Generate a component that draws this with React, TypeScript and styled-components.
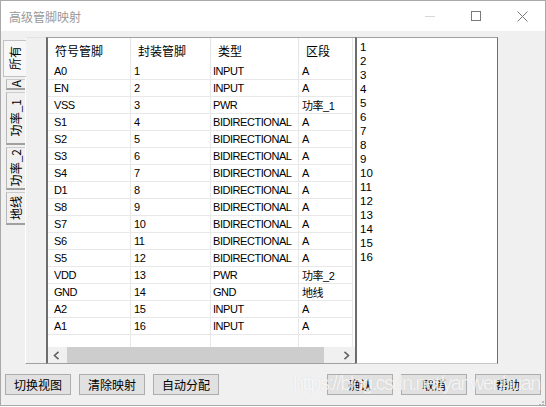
import React from "react";
import styled, { createGlobalStyle } from "styled-components";

const GlobalStyle = createGlobalStyle`
  html, body {
    margin: 0;
    padding: 0;
    background: #ffffff;
  }
  body {
    font-family: "Liberation Sans", "Noto Sans CJK SC", sans-serif;
  }
`;

type Pin = [string, string, string, string];

const pins: Pin[] = [
  ["A0", "1", "INPUT", "A"],
  ["EN", "2", "INPUT", "A"],
  ["VSS", "3", "PWR", "功率_1"],
  ["S1", "4", "BIDIRECTIONAL", "A"],
  ["S2", "5", "BIDIRECTIONAL", "A"],
  ["S3", "6", "BIDIRECTIONAL", "A"],
  ["S4", "7", "BIDIRECTIONAL", "A"],
  ["D1", "8", "BIDIRECTIONAL", "A"],
  ["S8", "9", "BIDIRECTIONAL", "A"],
  ["S7", "10", "BIDIRECTIONAL", "A"],
  ["S6", "11", "BIDIRECTIONAL", "A"],
  ["S5", "12", "BIDIRECTIONAL", "A"],
  ["VDD", "13", "PWR", "功率_2"],
  ["GND", "14", "GND", "地线"],
  ["A2", "15", "INPUT", "A"],
  ["A1", "16", "INPUT", "A"],
];

const headers = ["符号管脚", "封装管脚", "类型", "区段"];
const colWidths = [83, 80, 88, 54];
const cellPad = [6, 3, 2, 3];

const tabs = [
  { label: "所有", h: 37, active: true },
  { label: "A", h: 11, active: false },
  { label: "功率_1", h: 53, active: false },
  { label: "功率_2", h: 43, active: false },
  { label: "地线", h: 33, active: false },
];

export default function App() {
  return (
    <>
      <GlobalStyle />
      <Window>
        <TitleBar>
          <Title>高级管脚映射</Title>
          <CtrlButton>
            <svg width="10" height="10" viewBox="0 0 10 10">
              <line x1="0" y1="5.5" x2="10" y2="5.5" stroke="#d6d6d6" strokeWidth="1" />
            </svg>
          </CtrlButton>
          <CtrlButton>
            <svg width="10" height="10" viewBox="0 0 10 10">
              <rect x="0.5" y="0.5" width="9" height="9" fill="none" stroke="#7a7a7a" strokeWidth="1" />
            </svg>
          </CtrlButton>
          <CtrlButton>
            <svg width="11" height="11" viewBox="0 0 11 11">
              <path d="M0.5 0.5 L10.5 10.5 M10.5 0.5 L0.5 10.5" stroke="#7a7a7a" strokeWidth="1" />
            </svg>
          </CtrlButton>
        </TitleBar>

        <Body>
          <MainRow>
            <TabStrip>
              {tabs.map((t) => (
                <Tab key={t.label} $active={t.active} $h={t.h}>
                  <TabLabel>{t.label}</TabLabel>
                </Tab>
              ))}
            </TabStrip>
            <TabPanel />

            <Grid>
              <Viewport>
                <Row $header>
                  {headers.map((h, i) => (
                    <HeadCell key={h} $w={colWidths[i]}>
                      {h}
                    </HeadCell>
                  ))}
                </Row>
                {pins.map((p) => (
                  <Row key={p[0]}>
                    {p.map((v, i) => (
                      <Cell key={i} $w={colWidths[i]} $pad={cellPad[i]}>
                        {v}
                      </Cell>
                    ))}
                  </Row>
                ))}
                <Row>
                  {colWidths.map((w, i) => (
                    <Cell key={i} $w={w} $pad={cellPad[i]} />
                  ))}
                </Row>
              </Viewport>
              <HScroll>
                <ArrowBtn>
                  <svg width="7" height="9" viewBox="0 0 7 9">
                    <polyline points="5.5,0.8 1.5,4.5 5.5,8.2" fill="none" stroke="#606060" strokeWidth="1.6" />
                  </svg>
                </ArrowBtn>
                <Track>
                  <Thumb />
                </Track>
                <ArrowBtn>
                  <svg width="7" height="9" viewBox="0 0 7 9">
                    <polyline points="1.5,0.8 5.5,4.5 1.5,8.2" fill="none" stroke="#606060" strokeWidth="1.6" />
                  </svg>
                </ArrowBtn>
              </HScroll>
            </Grid>

            <ListBox>
              {pins.map((p) => (
                <ListItem key={p[1]}>{p[1]}</ListItem>
              ))}
            </ListBox>
          </MainRow>

          <ButtonRow>
            <Button>切换视图</Button>
            <Button>清除映射</Button>
            <Button>自动分配</Button>
            <Spacer />
            <Button>确认</Button>
            <Button>取消</Button>
            <Button>帮助</Button>
          </ButtonRow>
        </Body>

        <Watermark>https://blog.csdn.net/yanwenhuan</Watermark>
        <Grip>
          <svg width="9" height="9" viewBox="0 0 9 9">
            <rect x="7" y="1" width="2" height="2" fill="#b8b8b8" />
            <rect x="4" y="4" width="2" height="2" fill="#b8b8b8" />
            <rect x="7" y="4" width="2" height="2" fill="#b8b8b8" />
            <rect x="1" y="7" width="2" height="2" fill="#b8b8b8" />
            <rect x="4" y="7" width="2" height="2" fill="#b8b8b8" />
            <rect x="7" y="7" width="2" height="2" fill="#b8b8b8" />
          </svg>
        </Grip>
      </Window>
    </>
  );
}

///////// Styled Components /////////
const Window = styled.div`
  position: relative;
  width: 546px;
  height: 406px;
  box-sizing: border-box;
  border: 1px solid #a9a9a9;
  background: #f0f0f0;
  display: flex;
  flex-direction: column;
  overflow: hidden;
`;

const TitleBar = styled.div`
  height: 30px;
  background: #ffffff;
  display: flex;
  align-items: center;
  flex-shrink: 0;
`;

const Title = styled.div`
  flex: 1;
  padding-left: 8px;
  font-family: "Noto Sans CJK SC", sans-serif;
  font-size: 12px;
  color: #999999;
`;

const CtrlButton = styled.div`
  width: 46px;
  height: 30px;
  display: flex;
  align-items: center;
  justify-content: center;
`;

const Body = styled.div`
  flex: 1;
  padding: 6px 4px 0 3px;
  display: flex;
  flex-direction: column;
`;

const MainRow = styled.div`
  display: flex;
  height: 327px;
`;

const TabStrip = styled.div`
  width: 22px;
  padding-top: 3px;
  display: flex;
  flex-direction: column;
  align-items: flex-end;
  gap: 2px;
  position: relative;
  z-index: 1;
  margin-right: -1px;
`;

const Tab = styled.div<{ $active: boolean; $h: number }>`
  box-sizing: border-box;
  width: ${(p) => (p.$active ? "23px" : "19px")};
  height: ${(p) => p.$h}px;
  background: ${(p) => (p.$active ? "#f7f7f7" : "#f0f0f0")};
  border-left: 1px solid ${(p) => (p.$active ? "#c2c2c2" : "#b8b8b8")};
  border-top: 1px solid ${(p) => (p.$active ? "#c2c2c2" : "#cccccc")};
  border-bottom: ${(p) => (p.$active ? "1px solid #c2c2c2" : "2px solid #a0a0a0")};
  display: flex;
  align-items: center;
  justify-content: center;
  overflow: hidden;
  margin-right: ${(p) => (p.$active ? "0" : "1px")};
`;

const TabLabel = styled.span`
  writing-mode: vertical-rl;
  text-orientation: sideways;
  transform: rotate(180deg);
  font-family: "Noto Sans CJK SC", sans-serif;
  font-size: 12px;
  line-height: 14px;
  color: #000000;
  white-space: nowrap;
`;

const TabPanel = styled.div`
  box-sizing: border-box;
  width: 21px;
  background: #f0f0f0;
  border-left: 1px solid #ffffff;
  border-top: 1px solid #e3e3e3;
  border-bottom: 1px solid #a0a0a0;
`;

const Grid = styled.div`
  box-sizing: border-box;
  width: 309px;
  display: flex;
  flex-direction: column;
  background: #ffffff;
  border-top: 1px solid #a0a0a0;
  border-left: 2px solid #6d6d6d;
  border-bottom: 1px solid #a0a0a0;
`;

const Viewport = styled.div`
  flex: 1;
  overflow: hidden;
`;

const Row = styled.div<{ $header?: boolean }>`
  display: flex;
  height: ${(p) => (p.$header ? "25px" : "17px")};
`;

const HeadCell = styled.div<{ $w: number }>`
  box-sizing: border-box;
  width: ${(p) => p.$w}px;
  padding-left: 7px;
  display: flex;
  align-items: center;
  border-right: 1px solid #e5e5e5;
  font-family: "Noto Sans CJK SC", sans-serif;
  font-size: 12px;
  color: #000000;
`;

const Cell = styled.div<{ $w: number; $pad: number }>`
  box-sizing: border-box;
  width: ${(p) => p.$w}px;
  padding-left: ${(p) => p.$pad}px;
  display: flex;
  align-items: center;
  border-right: 1px solid #e8e8e8;
  border-bottom: 1px solid #e8e8e8;
  font-size: 11px;
  letter-spacing: -0.45px;
  color: #000000;
  white-space: nowrap;
  overflow: hidden;
`;

const HScroll = styled.div`
  height: 16px;
  display: flex;
  background: #f0f0f0;
  flex-shrink: 0;
`;

const ArrowBtn = styled.div`
  width: 17px;
  display: flex;
  align-items: center;
  justify-content: center;
`;

const Track = styled.div`
  flex: 1;
  display: flex;
`;

const Thumb = styled.div`
  width: 257px;
  margin-left: 2px;
  background: #cdcdcd;
`;

const ListBox = styled.div`
  box-sizing: border-box;
  width: 143px;
  background: #ffffff;
  border-top: 1px solid #a0a0a0;
  border-left: 2px solid #6d6d6d;
  border-right: 1px solid #6d6d6d;
  border-bottom: 1px solid #c8c8c8;
  padding: 2px 3px;
`;

const ListItem = styled.div`
  font-size: 11.5px;
  line-height: 14px;
  color: #000000;
`;

const ButtonRow = styled.div`
  display: flex;
  gap: 8px;
  margin-top: 10px;
  margin-left: 1px;
`;

const Spacer = styled.div`
  flex: 1;
`;

const Button = styled.button`
  box-sizing: border-box;
  width: 66px;
  height: 21px;
  padding: 0;
  background: #e1e1e1;
  border: 1px solid #adadad;
  font-family: "Noto Sans CJK SC", sans-serif;
  font-size: 12px;
  color: #000000;
`;

const Watermark = styled.div`
  position: absolute;
  left: 292px;
  top: 371px;
  font-family: "Liberation Sans", sans-serif;
  font-size: 20px;
  letter-spacing: -1.6px;
  color: rgba(255, 255, 255, 0.78);
  text-shadow: 0 0 1px rgba(0, 0, 0, 0.12);
  pointer-events: none;
  white-space: nowrap;
`;

const Grip = styled.div`
  position: absolute;
  right: 1px;
  bottom: 1px;
  width: 9px;
  height: 9px;
`;
